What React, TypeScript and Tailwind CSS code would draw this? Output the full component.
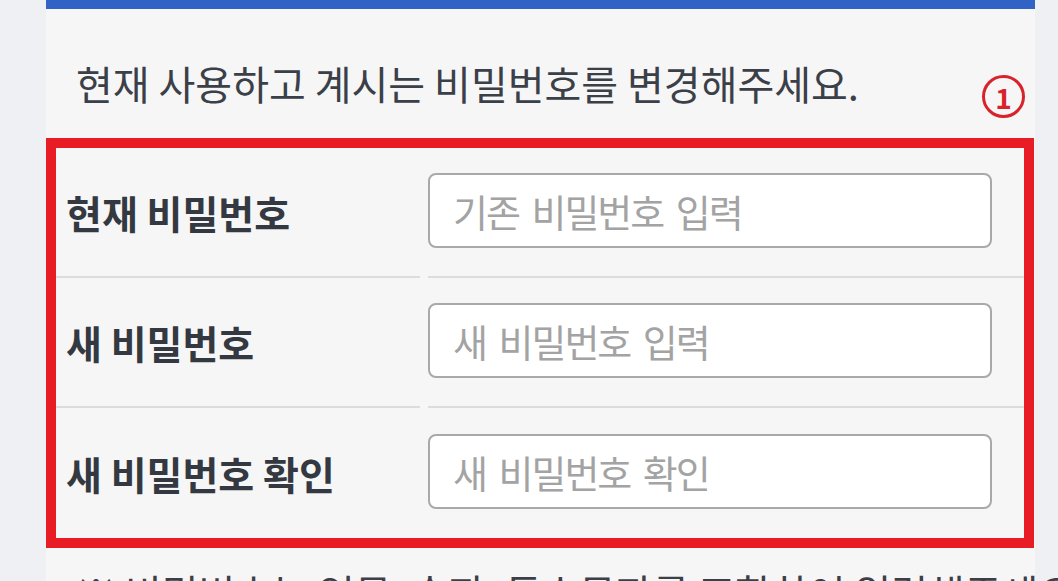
const rows = [
  { label: "현재 비밀번호", placeholder: "기존 비밀번호 입력" },
  { label: "새 비밀번호", placeholder: "새 비밀번호 입력" },
  { label: "새 비밀번호 확인", placeholder: "새 비밀번호 확인" },
];

const App = () => {
  return (
    <div className="w-[1058px] h-[581px] overflow-hidden bg-[#eef0f3] pl-[46px] font-['Noto_Sans_CJK_KR',sans-serif]">
      <section className="w-[989px] h-full bg-[#f6f6f6] flex flex-col">
        <div className="shrink-0 h-[9px] bg-[#3163c6]" />
        <div className="shrink-0 flex items-start justify-between h-[129px] pl-[30px] pr-[10px]">
          <p className="mt-[50px] text-[40px] leading-[48px] text-[#3b4048]">
            현재 사용하고 계시는 비밀번호를 변경해주세요.
          </p>
          <span className="shrink-0 mt-[66px] w-[43px] h-[43px] rounded-full border-[3px] border-[#d9232b] flex items-center justify-center text-[#d9232b] text-[28px] font-bold leading-none">
            1
          </span>
        </div>
        <div className="shrink-0 w-[988px] border-[10px] border-[#e81c24] grid grid-cols-[364px_1fr] gap-x-[8px]">
          {rows.map((row, i) => {
            const line = i < rows.length - 1 ? "border-b-2 border-[#dcdcdc]" : "";
            return (
              <div key={row.label} className="contents">
                <div className={`h-[130px] flex items-center pl-[10px] text-[39px] font-bold text-[#343941] ${line}`}>
                  {row.label}
                </div>
                <div className={`h-[130px] flex items-center ${line}`}>
                  <input
                    type="password"
                    placeholder={row.placeholder}
                    className="w-[564px] h-[75px] -mt-[4px] rounded-[8px] border-2 border-[#a9a9a9] bg-white px-[23px] text-[38px] tracking-[-2px] [word-spacing:6px] text-[#333] placeholder:text-[#a3a3a3] outline-none"
                  />
                </div>
              </div>
            );
          })}
        </div>
        <p className="shrink-0 mt-[20px] pl-[30px] text-[40px] leading-[48px] text-[#3b4048] whitespace-nowrap">
          ※ 비밀번호는 영문, 숫자, 특수문자를 조합하여 입력해주세요.
        </p>
      </section>
    </div>
  );
};

export default App;
